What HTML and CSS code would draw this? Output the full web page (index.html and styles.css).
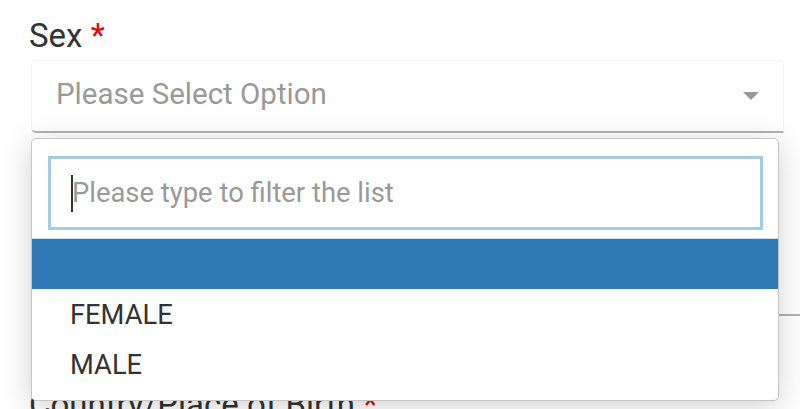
FILE: index.html
```html
<!DOCTYPE html>
<html lang="en">
<head>
    <meta charset="UTF-8">
    <meta name="viewport" content="width=device-width, initial-scale=1.0">
    <title>Personal Details</title>
    <link rel="stylesheet" href="styles.css">
</head>
<body>
    <div class="form">
        <div class="field">
            <label class="label">Sex <span class="req">*</span></label>
            <div class="select-wrap">
                <div class="select">
                    <span class="placeholder">Please Select Option</span>
                    <span class="arrow"></span>
                </div>

                <div class="dropdown">
                    <div class="search">
                        <div class="filter">
                            <span class="caret"></span>
                            <span class="placeholder">Please type to filter the list</span>
                        </div>
                    </div>
                    <ul class="options">
                        <li class="option active"></li>
                        <li class="option">FEMALE</li>
                        <li class="option">MALE</li>
                    </ul>
                </div>
            </div>
        </div>

        <div class="field hidden-field">
            <div class="line-input"></div>
        </div>

        <div class="field">
            <label class="label">Country/Place of Birth <span class="req">*</span></label>
        </div>
    </div>
</body>
</html>
```
FILE: styles.css
```css
body {
    margin: 0;
    background-color: #fff;
    font-family: Roboto, "Liberation Sans", sans-serif;
    color: #333;
    overflow: hidden;
}
.form {
    padding: 16px 0 0 29px;
}
.label {
    display: block;
    font-size: 33px;
    line-height: 39px;
    color: #333;
}
.req {
    color: #e00;
}
.select-wrap {
    position: relative;
    margin: 5px 0 0 2px;
    width: 753px;
}
.select {
    height: 70px;
    display: flex;
    align-items: center;
    justify-content: space-between;
    padding: 0 24px 0 24px;
    border: 1px solid #f3f3f3;
    border-bottom: 2px solid #b3b3b3;
    border-radius: 5px 5px 0 5px;
    box-sizing: content-box;
    width: calc(100% - 50px);
}
.select .placeholder {
    font-size: 29.5px;
    color: #999;
    margin-top: -5px;
}
.arrow {
    width: 0;
    height: 0;
    border-left: 8px solid transparent;
    border-right: 8px solid transparent;
    border-top: 8px solid #999;
    margin-top: 0;
}
.dropdown {
    position: absolute;
    top: calc(100% + 5px);
    left: 0;
    width: 748px;
    box-sizing: border-box;
    background-color: #fff;
    border: 1px solid #c6c6c6;
    border-radius: 5px;
    box-shadow: 0 6px 30px rgba(0, 0, 0, 0.18);
    z-index: 2;
}
.search {
    padding: 17px 15px 8px 16px;
}
.filter {
    height: 68px;
    border: 3px solid #a7cae3;
    display: flex;
    align-items: center;
    padding-left: 20px;
}
.caret {
    display: inline-block;
    width: 2px;
    height: 37px;
    background-color: #333;
    margin-right: -1px;
}
.filter .placeholder {
    font-size: 27.4px;
    color: #999;
}
.options {
    list-style: none;
    margin: 0;
    padding: 0 0 11px 0;
}
.option {
    height: 50px;
    line-height: 52px;
    padding-left: 38px;
    font-size: 27.3px;
    color: #333;
}
.option.active {
    background-color: #2e79b3;
    border-top: 1px solid #c7dcec;
    height: 50px;
}
.hidden-field {
    height: 183px;
    position: relative;
}
.line-input {
    position: absolute;
    left: 2px;
    right: -40px;
    bottom: 0;
    border-bottom: 2px solid #b3b3b3;
}
.hidden-field + .field {
    margin-top: 69px;
}
```
